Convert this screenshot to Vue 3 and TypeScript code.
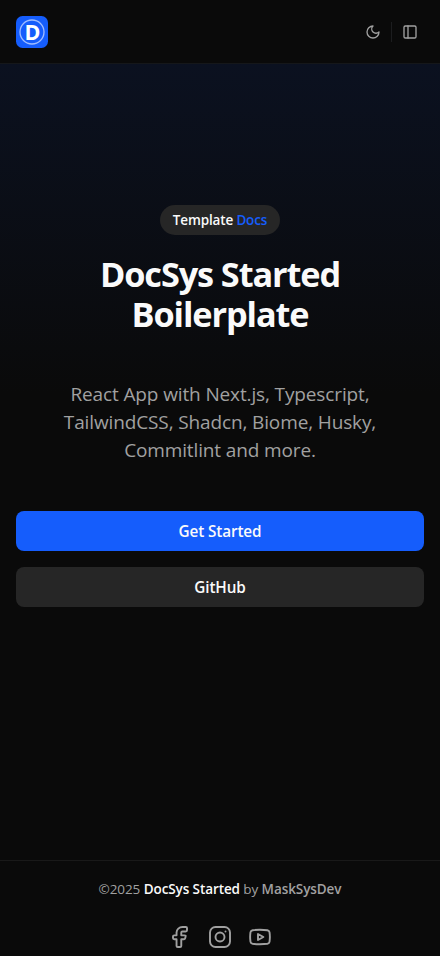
<script setup lang="ts">
interface Social {
  name: string
  paths: string[]
}

const year = 2025
const socials: Social[] = [
  {
    name: 'Facebook',
    paths: [
      'M6.182 10.333c-.978 0-1.182.192-1.182 1.111v1.667c0 .919.204 1.111 1.182 1.111h2.363v6.667c0 .919.205 1.111 1.182 1.111h2.364c.978 0 1.182-.192 1.182-1.111v-6.667h2.654c.741 0 .932-.135 1.136-.806l.507-1.666c.349-1.148.134-1.417-1.137-1.417h-3.16V7.556c0-.614.529-1.112 1.182-1.112h3.363c.978 0 1.182-.192 1.182-1.110V3.110C19 2.192 18.796 2 17.818 2h-3.363c-3.264 0-5.910 2.487-5.910 5.556v2.777Z',
    ],
  },
  {
    name: 'Instagram',
    paths: [
      'M7.5 2h9A5.5 5.5 0 0 1 22 7.5v9a5.5 5.5 0 0 1-5.5 5.5h-9A5.5 5.5 0 0 1 2 16.5v-9A5.5 5.5 0 0 1 7.5 2Z',
      'M16.5 12a4.5 4.5 0 1 1-9 0a4.5 4.5 0 1 1 9 0Z',
      'M17.5 6.5h.01',
    ],
  },
  {
    name: 'YouTube',
    paths: [
      'M12 19.2c2.6 0 5.200-.1 7.400-.4c1.200-.2 1.900-.9 2.100-2c.4-2.600.4-7 0-9.600c-.2-1.100-.9-1.800-2.100-2c-4.400-.6-10.400-.6-14.800 0c-1.200.2-1.900.9-2.100 2c-.4 2.600-.4 7 0 9.600c.2 1.100.9 1.800 2.100 2c2.200.3 4.800.4 7.400.4Z',
      'M10 9v6l5.400-3Z',
    ],
  },
]
</script>

<template>
  <div class="page">
    <header class="header">
      <svg class="logo" viewBox="0 0 32 32" aria-label="DocSys">
        <rect width="32" height="32" rx="6.5" fill="#155dfc" />
        <circle cx="16" cy="16" r="12" fill="none" stroke="#a0bdff" stroke-width="1.3" />
        <text x="16.4" y="23.6" text-anchor="middle" class="logo-letter">D</text>
      </svg>
      <div class="actions">
        <svg class="icon" viewBox="0 0 24 24"><path d="M12 3a6 6 0 0 0 9 9a9 9 0 1 1-9-9Z" /></svg>
        <span class="divider"></span>
        <svg class="icon" viewBox="0 0 24 24"><rect x="3" y="3" width="18" height="18" rx="2" /><path d="M9 3v18" /></svg>
      </div>
    </header>

    <main class="hero">
      <span class="badge"><span>Template <span class="accent">Docs</span></span></span>
      <h1 class="title">DocSys Started<br />Boilerplate</h1>
      <p class="lead">React App with Next.js, Typescript,<br />TailwindCSS, Shadcn, Biome, Husky,<br />Commitlint and more.</p>
      <div class="buttons">
        <a class="button primary">Get Started</a>
        <a class="button secondary">GitHub</a>
      </div>
    </main>

    <footer class="footer">
      <p class="copyright">©{{ year }} <strong class="product">DocSys Started</strong> by <strong>MaskSysDev</strong></p>
      <div class="socials">
        <svg v-for="item in socials" :key="item.name" class="social" viewBox="0 0 24 24" :aria-label="item.name">
          <path v-for="d in item.paths" :key="d" :d="d" />
        </svg>
      </div>
    </footer>
  </div>
</template>

<style>
body {
  background: #0a0a0a;
}
</style>

<style scoped>
.page {
  box-sizing: border-box;
  width: 440px;
  height: 956px;
  display: flex;
  flex-direction: column;
  overflow: hidden;
  background: #0a0a0a;
  color: #fafafa;
  font-family: "Open Sans", "Noto Sans", sans-serif;
}
.header {
  box-sizing: border-box;
  height: 64px;
  flex: none;
  display: flex;
  align-items: center;
  justify-content: space-between;
  padding: 0 22px 0 16px;
  border-bottom: 1px solid #15171a;
}
.logo {
  width: 32px;
  height: 32px;
}
.logo-letter {
  fill: #fff;
  font-size: 21.5px;
  font-weight: 700;
}
.actions {
  display: flex;
  align-items: center;
  gap: 10px;
}
.icon {
  width: 16px;
  height: 16px;
  fill: none;
  stroke: #a1a1a1;
  stroke-width: 2;
  stroke-linecap: round;
  stroke-linejoin: round;
}
.divider {
  width: 1px;
  height: 20px;
  background: #1c1d1f;
}
.hero {
  flex: 1;
  display: flex;
  flex-direction: column;
  align-items: center;
  padding: 141px 16px 0;
  background: linear-gradient(to bottom, #0b1120 0, #0a0a0a 330px);
}
.badge {
  box-sizing: border-box;
  width: 120px;
  height: 30px;
  display: flex;
  align-items: center;
  justify-content: center;
  border-radius: 15px;
  background: #262626;
  font-size: 13.5px;
  font-weight: 600;
  letter-spacing: -0.15px;
  white-space: nowrap;
}
.accent {
  color: #155dfc;
}
.title {
  margin: 19px 0 0;
  font-size: 34.3px;
  line-height: 40px;
  font-weight: 700;
  letter-spacing: -1.1px;
  text-align: center;
  white-space: nowrap;
}
.lead {
  margin: 46px 0 0;
  color: #a1a1a1;
  font-size: 19px;
  line-height: 28px;
  letter-spacing: -0.13px;
  text-align: center;
  white-space: nowrap;
}
.buttons {
  align-self: stretch;
  display: flex;
  flex-direction: column;
  gap: 16px;
  margin-top: 47px;
}
.button {
  height: 40px;
  display: flex;
  align-items: center;
  justify-content: center;
  border-radius: 8px;
  font-size: 15.3px;
  font-weight: 600;
  letter-spacing: -0.12px;
}
.primary {
  background: #155dfc;
}
.secondary {
  background: #262626;
}
.footer {
  box-sizing: border-box;
  height: 96px;
  flex: none;
  display: flex;
  flex-direction: column;
  align-items: center;
  border-top: 1px solid #191919;
}
.copyright {
  margin: 18px 0 0;
  color: #a1a1a1;
  font-size: 13.5px;
  line-height: 20px;
  letter-spacing: -0.09px;
  white-space: nowrap;
}
.copyright strong {
  font-weight: 600;
}
.copyright .product {
  color: #fafafa;
}
.socials {
  display: flex;
  gap: 16px;
  margin-top: 26px;
}
.social {
  width: 24px;
  height: 24px;
  fill: none;
  stroke: #a1a1a1;
  stroke-width: 1.9;
  stroke-linecap: round;
  stroke-linejoin: round;
}
</style>
